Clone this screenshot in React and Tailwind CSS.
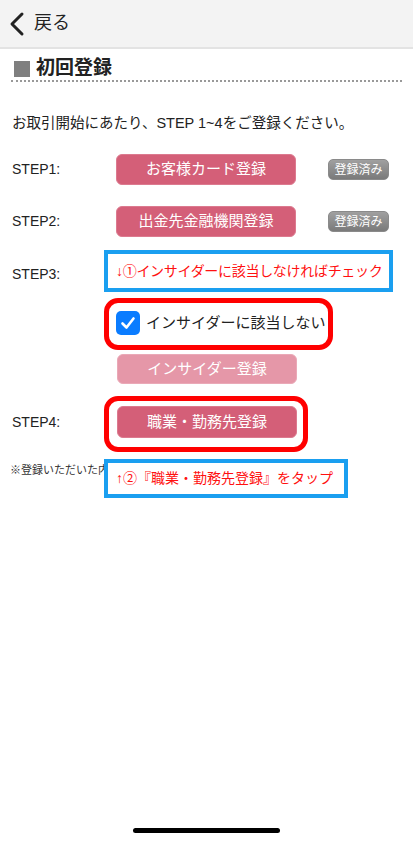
import React from 'react';

const jp = { fontFamily: '"Liberation Sans", "Noto Sans CJK JP", sans-serif' };

const PinkButton = ({ children, light }) => (
    <div
        className={
            'w-[180px] h-full flex items-center justify-center rounded-[6px] text-white text-[15px] border ' +
            (light ? 'bg-[#e597a8] border-[#eaa9b7]' : 'bg-[#d45f78] border-[#dc7a8f]')
        }
    >
        {children}
    </div>
);

const DoneBadge = () => (
    <div className="ml-[32px] w-[61px] h-[21px] flex items-center justify-center rounded-[5px] bg-gradient-to-b from-[#a0a0a0] to-[#7a7a7a] text-white text-[12px] border border-[#8a8a8a]">
        登録済み
    </div>
);

const StepLabel = ({ children }) => (
    <div className="w-[104px] shrink-0 text-[14px] text-[#222]">{children}</div>
);

export default function App() {
    return (
        <div className="relative w-[413px] min-h-[842px] flex flex-col bg-white overflow-hidden" style={jp}>
            {/* header */}
            <div className="h-[49px] bg-[#f3f3f3] border-b-2 border-[#e3e3e3] flex items-center">
                <svg width="34" height="48" viewBox="0 0 34 48" className="shrink-0">
                    <path d="M22 14 L12 24 L22 34" fill="none" stroke="#222" strokeWidth="3" strokeLinecap="round" strokeLinejoin="round" />
                </svg>
                <span className="text-[18px] text-[#222]">戻る</span>
            </div>

            {/* title */}
            <div className="mx-[11px] mt-[8px] h-[25px] flex items-center border-b-2 border-dotted border-[#999]">
                <div className="ml-[3px] w-[16px] h-[16px] bg-[#7f7f7f]" />
                <span className="ml-[6px] text-[19px] font-bold text-[#222]">初回登録</span>
            </div>

            <div className="mt-[31px] px-[12px] text-[14.5px] leading-[20px] text-[#222] whitespace-nowrap">
                お取引開始にあたり、STEP 1~4をご登録ください。
            </div>

            {/* STEP1 */}
            <div className="mt-[21px] px-[12px] h-[31px] flex items-center">
                <StepLabel>STEP1:</StepLabel>
                <PinkButton>お客様カード登録</PinkButton>
                <DoneBadge />
            </div>

            {/* STEP2 */}
            <div className="mt-[21px] px-[12px] h-[31px] flex items-center">
                <StepLabel>STEP2:</StepLabel>
                <PinkButton>出金先金融機関登録</PinkButton>
                <DoneBadge />
            </div>

            {/* STEP3 */}
            <div className="mt-[26px] px-[12px] flex items-start">
                <div className="w-[104px] shrink-0 text-[14px] leading-[22px] text-[#222]">STEP3:</div>
                <div className="flex flex-col">
                    <div className="pt-[15px] text-[12px] leading-[16px] text-[#5aa7e0] whitespace-nowrap">
                        ※インサイダー取引の未然防止について
                    </div>
                    <div className="mt-[14px] h-[30px] flex items-center">
                        <div className="w-[24px] h-[24px] rounded-[5px] bg-[#0a7cff] flex items-center justify-center">
                            <svg width="18" height="18" viewBox="0 0 18 18">
                                <path d="M3.5 9.5 L7.5 13.5 L14.5 4.5" fill="none" stroke="#fff" strokeWidth="2.6" strokeLinecap="round" strokeLinejoin="round" />
                            </svg>
                        </div>
                        <span className="ml-[6px] text-[15px] text-[#222]">インサイダーに該当しない</span>
                    </div>
                    <div className="mt-[16px] h-[30px] ml-[1px]">
                        <PinkButton light>インサイダー登録</PinkButton>
                    </div>
                </div>
            </div>

            {/* STEP4 */}
            <div className="mt-[22px] px-[12px] h-[32px] flex items-center">
                <StepLabel>STEP4:</StepLabel>
                <div className="h-full ml-[1px]">
                    <PinkButton>職業・勤務先登録</PinkButton>
                </div>
            </div>

            <div className="mt-[24px] ml-[10px] w-[94px] overflow-hidden text-[11px] leading-[16px] text-[#333] whitespace-nowrap">
                ※登録いただいた内容
            </div>

            {/* home indicator */}
            <div className="mt-auto mb-[9px] mx-auto w-[147px] h-[5px] rounded-full bg-black" />

            {/* annotations */}
            <div className="absolute left-[104px] top-[250px] w-[289px] h-[42px] border-4 border-[#1a9ff0] bg-white flex items-center pl-[8px]">
                <span className="text-[14px] text-[#ff1010] whitespace-nowrap tracking-[-0.3px]">↓①インサイダーに該当しなければチェック</span>
            </div>
            <div className="absolute left-[104px] top-[298px] w-[229px] h-[52px] border-[5px] border-[#ff0000] rounded-[14px]" />
            <div className="absolute left-[104px] top-[396px] w-[204px] h-[56px] border-[5px] border-[#ff0000] rounded-[14px]" />
            <div className="absolute left-[104px] top-[459px] w-[244px] h-[39px] border-4 border-[#1a9ff0] bg-white flex items-center pl-[8px]">
                <span className="text-[14px] text-[#ff1010] whitespace-nowrap">↑②『職業・勤務先登録』をタップ</span>
            </div>
        </div>
    );
}
